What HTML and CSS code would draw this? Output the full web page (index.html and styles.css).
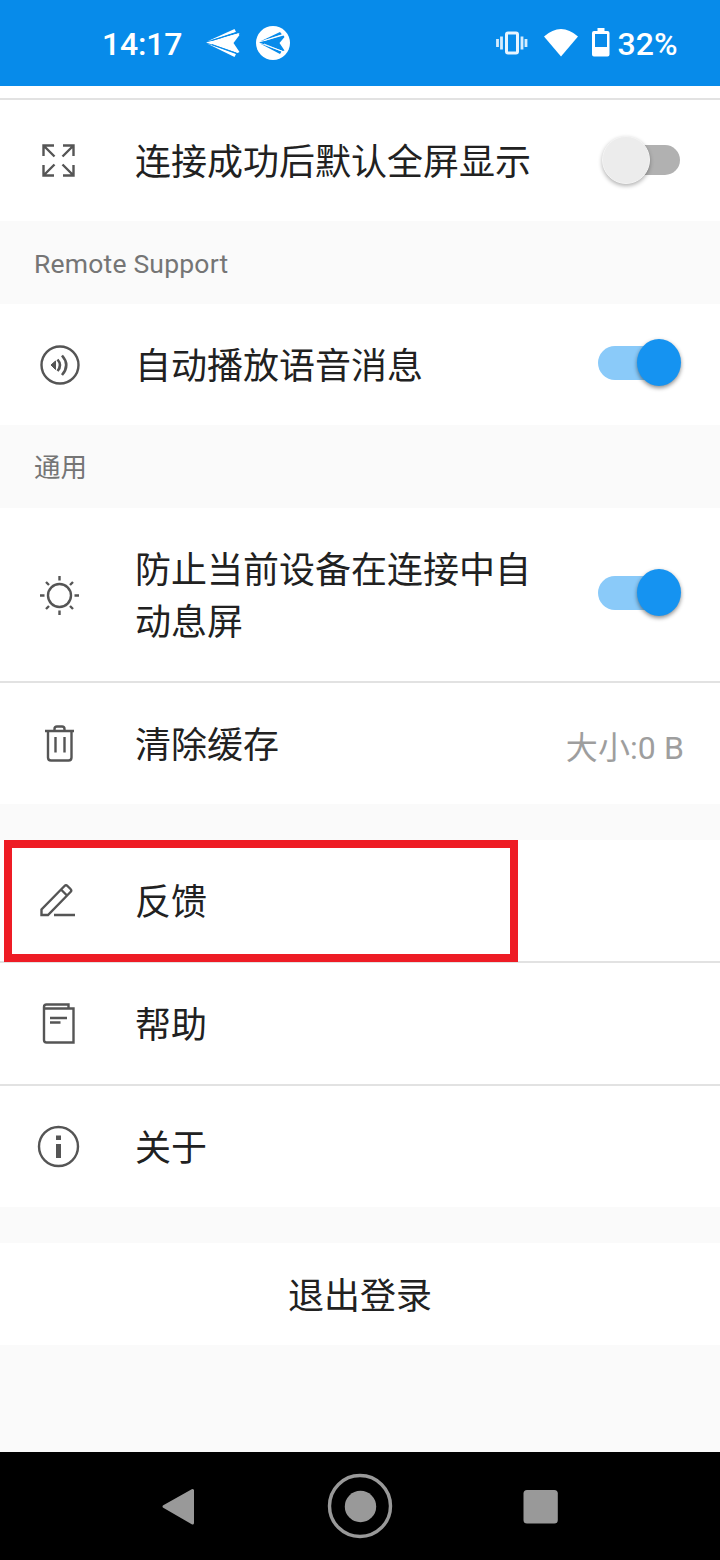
FILE: index.html
```html
<!DOCTYPE html>
<html lang="zh-CN">
<head>
<meta charset="utf-8">
<title>设置</title>
<link rel="stylesheet" href="styles.css">
</head>
<body>
<header class="status">
  <span class="clock">14:17</span>
  <svg class="notices" width="90" height="40" viewBox="0 0 90 40">
    <g fill="#fff"><path d="M4 19.500 36 10.500 37.500 12 31.500 20 37.500 29 35.500 30Z"/><path d="M5 18.500 32.500 6 34 9Z"/><path d="M5 20.500 32.500 34 34 31Z"/><path d="M18 15.500 37.500 10 36 13Z"/></g>
    <path d="M10 17.500 35 9.500M10 21.500 34 30" stroke="#078bea" stroke-width="1"/>
    <circle cx="71" cy="20" r="17" fill="#fff"/>
    <g fill="#078bea"><path d="M57 19.500 81.500 12.500 82.500 14 77.500 20 82.500 27.500 81 28Z"/><path d="M58 18.500 78 9 80 11.500Z"/><path d="M58 20.500 78 31 79.500 28.500Z"/></g>
    <path d="M62 17.700 81 11.500M62 21 80 28.200" stroke="#fff" stroke-width=".9"/>
  </svg>
  <svg class="signals" width="124" height="40" viewBox="0 0 124 40">
    <path d="M3.500 16v8M7.500 13.500v13M28 13.500v13M32 16v8" stroke="#d5ecfd" stroke-width="2.800"/>
    <rect x="12.500" y="10" width="11" height="20" rx="1.500" fill="none" stroke="#e8f5ff" stroke-width="3"/>
    <path d="M50 13.500Q67 -1.500 84 13.500L67 33.500Z" fill="#fff"/>
    <path fill="#fff" fill-rule="evenodd" d="M103.500 5h7v3h3q2 0 2 2v21.500q0 2-2 2h-13.500q-2 0-2-2v-21.500q0-2 2-2h3.500zM101 11v13h12V11z"/>
  </svg>
  <span class="battery">32%</span>
</header>
<main>
  <section class="group first">
    <div class="row">
      <svg class="icon" viewBox="0 0 80 61"><path d="M34.500 26.500 23.500 15.500M23.500 26V15.500H34M42.500 26.500 53.500 15.500M43 15.500H53.500V26M34.500 34.500 23.500 45.500M23.500 35V45.500H34M42.500 34.500 53.500 45.500M43 45.500H53.500V35"/></svg>
      <span class="label">连接成功后默认全屏显示</span>
      <span class="switch"></span>
    </div>
  </section>
  <h2 class="latin">Remote Support</h2>
  <section class="group">
    <div class="row">
      <svg class="icon" viewBox="0 -1 80 61"><circle cx="40" cy="30" r="18.500"/><path d="M31 30 35.500 26V34.500Z" fill="#555" stroke-width="1"/><path d="M37.500 24.500Q42.500 30 37.500 36M42 20.500Q50.500 30 42 40" stroke-width="2.600"/></svg>
      <span class="label">自动播放语音消息</span>
      <span class="switch on"></span>
    </div>
  </section>
  <h2>通用</h2>
  <section class="group">
    <div class="row tall">
      <svg class="icon" viewBox="0 -1 80 61"><circle cx="39.500" cy="30.500" r="11.500"/><path d="M39.500 11v4.500M39.500 45.500V50M20 30.500h4.500M54.500 30.500H59M26 17l3 3M53 17l-3 3M26 44l3-3M53 44l-3-3"/></svg>
      <span class="label">防止当前设备在连接中自动息屏</span>
      <span class="switch on"></span>
    </div>
    <div class="row">
      <svg class="icon" viewBox="0 -2 80 61"><path d="M25 16H54M34.500 16v-2q0-2.500 2.500-2.500h5q2.500 0 2.500 2.500v2M28 16V42.500q0 3 3 3H48.500q3 0 3-3V16M35.500 22V37.500M44.500 22V37.500"/></svg>
      <span class="label">清除缓存</span>
      <span class="size">大小:0 B</span>
    </div>
  </section>
  <section class="group spaced">
    <div class="row">
      <svg class="icon" viewBox="0 0 80 61"><path d="M21.500 45V39.500L44.500 16Q46 14.500 47.500 16L50.500 19Q52 20.500 50.500 22L28 45ZM41.500 20 46.500 25M34 45H55"/></svg>
      <span class="label">反馈</span>
      <span class="highlight"></span>
    </div>
    <div class="row">
      <svg class="icon" viewBox="0 3 80 61"><path d="M24 18.500H53.500V52.500H26.500Q24 52.500 24 50V17Q24 14.500 26.500 14.500H48.500V18.500M30 28H47M30 32.500H40.500"/></svg>
      <span class="label">帮助</span>
    </div>
    <div class="row">
      <svg class="icon" viewBox="0 1 80 61"><circle cx="38.500" cy="31.500" r="19.500"/><path d="M36 20.500h5v4.500h-5zM36 29h5v14h-5z" fill="#555" stroke="none"/></svg>
      <span class="label">关于</span>
    </div>
  </section>
  <div class="logout">退出登录</div>
</main>
<nav class="navbar">
  <svg width="720" height="108" viewBox="0 0 720 108" fill="#999">
    <path d="M164 54.500 192.500 38.500V71Z" stroke="#999" stroke-width="3" stroke-linejoin="round"/>
    <circle cx="360" cy="54" r="30.500" fill="none" stroke="#999" stroke-width="3.400"/>
    <circle cx="360.500" cy="54.500" r="15.700"/>
    <rect x="523.500" y="38" width="34.300" height="33.500" rx="3.500"/>
  </svg>
</nav>
</body>
</html>
```
FILE: styles.css
```css
* { box-sizing: border-box; }
body {
  margin: 0;
  width: 720px;
  height: 1560px;
  display: flex;
  flex-direction: column;
  overflow: hidden;
  background: #fafafa;
  color: #212121;
  font-family: Roboto, "Noto Sans CJK SC", sans-serif;
}
.status {
  height: 86px;
  flex: none;
  display: flex;
  align-items: center;
  padding: 0 42px 0 102px;
  background: #078bea;
  color: #fff;
  font-size: 32px;
  font-weight: 500;
}
.status svg { margin-bottom: 1px; }
.status span { padding-top: 2px; }
.clock { width: 100px; letter-spacing: -.2px; }
.signals { margin-left: auto; }
.battery { width: 60.500px; white-space: nowrap; }
main { flex: 1; }
.group { background: #fff; }
.group.first { padding-top: 12px; }
.group.first .row { border-top: 2px solid #e2e2e2; height: 123px; }
.row {
  position: relative;
  display: flex;
  align-items: center;
  height: 121px;
  padding: 0 36px 0 20px;
}
.row + .row { height: 123px; border-top: 2px solid #e2e2e2; }
.row.tall { height: 173px; }
.icon {
  width: 80px;
  height: 61px;
  flex: none;
  margin-right: 35px;
  fill: none;
  stroke: #555;
  stroke-width: 2.4;
}
.label {
  width: 400px;
  padding-top: 5px;
  font-size: 36px;
  line-height: 52px;
}
.switch {
  position: relative;
  width: 84px;
  height: 50px;
  margin: 0 2px 3px auto;
}
.switch::before {
  content: "";
  position: absolute;
  left: 8px;
  top: 11px;
  width: 74px;
  height: 30px;
  border-radius: 15px;
  background: #b1b1b1;
}
.switch::after {
  content: "";
  position: absolute;
  left: 4px;
  top: 3px;
  width: 46px;
  height: 46px;
  border-radius: 50%;
  background: #ececec;
  border: 1px solid #f4f4f4;
  box-shadow: 0 2px 4px rgba(0, 0, 0, .3);
}
.switch:not(.on)::after { top: 2px; }
.switch.on::before {
  left: 0;
  top: 8px;
  width: 76px;
  height: 34px;
  border-radius: 17px;
  background: #8acaf9;
}
.switch.on::after {
  left: 39px;
  top: 1px;
  width: 44px;
  height: 47px;
  border: 0;
  background: #1593f1;
  box-shadow: 0 2px 4px rgba(0, 0, 0, .45);
}
h2 {
  height: 83px;
  margin: 0;
  padding: 0 34px 2px;
  display: flex;
  align-items: center;
  color: #757575;
  font-size: 26.500px;
  font-weight: 400;
}
h2.latin { padding: 2px 34px 0; letter-spacing: .2px; }
.size {
  margin-left: auto;
  padding-top: 2px;
  color: #9e9e9e;
  font-size: 32px;
  letter-spacing: .1px;
  white-space: nowrap;
}
.spaced { margin: 36px 0; }
.highlight {
  position: absolute;
  left: 4px;
  top: 0;
  z-index: 1;
  width: 514px;
  height: 122px;
  border: 8px solid #ee1c25;
}
.logout {
  height: 102px;
  background: #fff;
  text-align: center;
  font-size: 36px;
  line-height: 108px;
}
.navbar { height: 108px; flex: none; background: #000; }
.navbar svg { display: block; }
```
